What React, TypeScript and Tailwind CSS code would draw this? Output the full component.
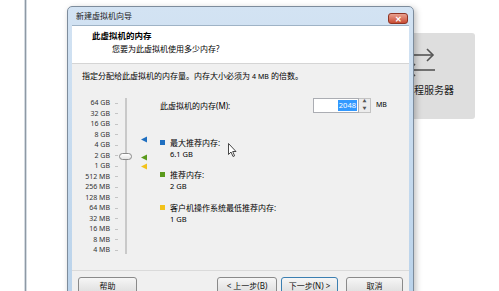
import React from "react";

const scale = [
  "64 GB",
  "32 GB",
  "16 GB",
  "8 GB",
  "4 GB",
  "2 GB",
  "1 GB",
  "512 MB",
  "256 MB",
  "128 MB",
  "64 MB",
  "32 MB",
  "16 MB",
  "8 MB",
  "4 MB",
];

function Marker({ color, top }: { color: string; top: number }) {
  return (
    <svg
      className="absolute left-0"
      style={{ top }}
      width="7"
      height="7"
      viewBox="0 0 7 7"
    >
      <polygon points="0,3.5 6,0.5 6,6.5" fill={color} />
    </svg>
  );
}

function Legend({
  color,
  title,
  value,
  className,
}: {
  color: string;
  title: string;
  value: string;
  className: string;
}) {
  return (
    <div className={`flex gap-[5px] leading-[11.5px] ${className}`}>
      <div className={`mt-[3px] size-[5px] ${color}`} />
      <div>
        <div className="text-[8px]">{title}</div>
        <div className="text-[7.5px]">{value}</div>
      </div>
    </div>
  );
}

function WinButton({
  children,
  className = "",
}: {
  children: React.ReactNode;
  className?: string;
}) {
  return (
    <div
      className={`flex h-[18px] items-center justify-center rounded-[3px] border bg-gradient-to-b from-[#f6f6f6] to-[#dddddd] text-[8px] text-[#111] ${className}`}
    >
      {children}
    </div>
  );
}

export default function App() {
  return (
    <div className="relative h-[291px] w-[499px] overflow-hidden bg-white font-['Noto_Sans','Noto_Sans_CJK_SC',sans-serif] text-black">
      {/* edge of the window behind */}
      <div className="absolute top-0 left-[24px] flex h-full">
        <div className="w-px bg-[#d4dbe2]" />
        <div className="w-px bg-[#8e99a4]" />
        <div className="w-px bg-[#d4dbe2]" />
      </div>

      {/* tile behind the dialog */}
      <div className="absolute top-[33px] left-[383px] flex h-[86px] w-[92px] flex-col items-center rounded-[3px] bg-[#dedede]">
        <svg
          className="mt-[14px] mr-[14px]"
          width="30"
          height="30"
          viewBox="0 0 30 30"
        >
          <g fill="none" stroke="#555" strokeWidth="1.6">
            <path d="M2 8 H26" />
            <path d="M20 2 L26 8 L20 14" />
            <path d="M2 23 H28" />
            <path d="M8 17 L2 23 L8 29" />
          </g>
        </svg>
        <div className="mt-[7px] text-[10px] leading-[12px] text-[#222]">
          远程服务器
        </div>
      </div>

      {/* wizard dialog */}
      <div className="absolute top-[6px] left-[67px] flex h-[300px] w-[347px] flex-col rounded-t-[5px] border border-[#7d8c9c] bg-gradient-to-b from-[#d3e3f3] to-[#b9d2ea] shadow-[2px_2px_6px_rgba(0,0,0,0.25)]">
        <div className="flex h-[18px] items-start justify-between pl-[8px] pr-[5px]">
          <div className="mt-[3px] text-[8px] leading-[12px] text-[#1a1a1a]">
            新建虚拟机向导
          </div>
          <div className="mt-[6px] flex h-[11px] w-[20px] items-center justify-center rounded-[3px] border border-[#8e3424] bg-gradient-to-b from-[#e8a08f] to-[#c84a32] text-[8px] leading-none font-bold text-white">
            ✕
          </div>
        </div>

        <div className="mx-[4px] flex flex-1 flex-col border-t border-[#9fb3c6] bg-[#f0f0f0]">
          {/* header */}
          <div className="h-[38px] border-b border-[#d5d5d5] bg-white pt-[4px]">
            <div className="pl-[20px] text-[8.5px] leading-[12px] font-bold">
              此虚拟机的内存
            </div>
            <div className="mt-[1px] pl-[40px] text-[8px] leading-[12px]">
              您要为此虚拟机使用多少内存?
            </div>
          </div>

          {/* body */}
          <div className="pt-[6px] pl-[10px] text-[8px] leading-[12px]">
            指定分配给此虚拟机的内存量。内存大小必须为{" "}
            <span className="text-[7px]">4 MB</span> 的倍数。
          </div>

          <div className="mt-[15px] flex h-[172px] pl-[10px]">
            <div className="w-[28px] text-right text-[7px] text-[#333]">
              {scale.map((s) => (
                <div className="h-[10.5px] leading-[10.5px]" key={s}>
                  {s}
                </div>
              ))}
            </div>
            <div className="ml-[5px] w-[3px]">
              {scale.map((s) => (
                <div className="flex h-[10.5px] items-center" key={s}>
                  <div className="h-px w-[3px] bg-[#c4c4c4]" />
                </div>
              ))}
            </div>
            <div className="relative w-[16px]">
              <div className="absolute top-0 left-[7px] h-[156px] w-[2px] border-x border-[#c9c9c9] bg-[#e6e6e6]" />
              <div className="absolute top-[55px] left-[1px] h-[7px] w-[13px] rounded-full border border-[#8a8a8a] bg-gradient-to-b from-white to-[#e4e4e4]" />
            </div>
            <div className="relative ml-[7px] w-[7px]">
              <Marker color="#1f6fc0" top={38} />
              <Marker color="#5a9a1c" top={55.5} />
              <Marker color="#f2c21a" top={65} />
            </div>

            <div className="ml-[12px] flex flex-col">
              <div className="flex h-[15px] items-center">
                <div className="w-[153px] text-[8px]">此虚拟机的内存(M):</div>
                <div className="flex h-[15px] w-[46px] items-center justify-end border border-[#abadb3] bg-white pr-[1px]">
                  <span className="bg-[#3399ff] px-[1px] text-[7.5px] leading-[11px] text-white">
                    2048
                  </span>
                </div>
                <div className="flex h-[15px] w-[12px] flex-col border border-l-0 border-[#c3c3c3] bg-[#ececec]">
                  <div className="flex flex-1 items-center justify-center text-[4px] leading-none text-[#555]">
                    ▲
                  </div>
                  <div className="flex flex-1 items-center justify-center text-[4px] leading-none text-[#555]">
                    ▼
                  </div>
                </div>
                <div className="ml-[5px] text-[7px]">MB</div>
              </div>

              <Legend
                className="mt-[24px]"
                color="bg-[#1f6fc0]"
                title="最大推荐内存:"
                value="6.1 GB"
              />
              <Legend
                className="mt-[9px]"
                color="bg-[#5a9a1c]"
                title="推荐内存:"
                value="2 GB"
              />
              <Legend
                className="mt-[10px]"
                color="bg-[#f2c21a]"
                title="客户机操作系统最低推荐内存:"
                value="1 GB"
              />
            </div>
          </div>

          {/* footer */}
          <div className="flex justify-between border-t border-[#dadada] px-[6px] pt-[6px]">
            <WinButton className="w-[59px] border-[#8a8a8a]">帮助</WinButton>
            <div className="flex">
              <WinButton className="w-[60px] border-[#8a8a8a]">
                &lt; 上一步(B)
              </WinButton>
              <WinButton className="ml-[4px] w-[57px] border-[#3c7fb1] from-[#eaf4fc] to-[#cfe4f5]">
                下一步(N) &gt;
              </WinButton>
              <WinButton className="ml-[8px] w-[57px] border-[#8a8a8a]">
                取消
              </WinButton>
            </div>
          </div>
        </div>
      </div>

      {/* mouse pointer */}
      <svg
        className="absolute top-[143px] left-[228px]"
        width="10"
        height="15"
        viewBox="0 0 10 15"
      >
        <path
          d="M0.5 0.5 L0.5 11.5 L3 9 L5 13.5 L6.6 12.8 L4.7 8.5 L8 8.5 Z"
          fill="white"
          stroke="#333"
          strokeWidth="0.9"
        />
      </svg>
    </div>
  );
}
